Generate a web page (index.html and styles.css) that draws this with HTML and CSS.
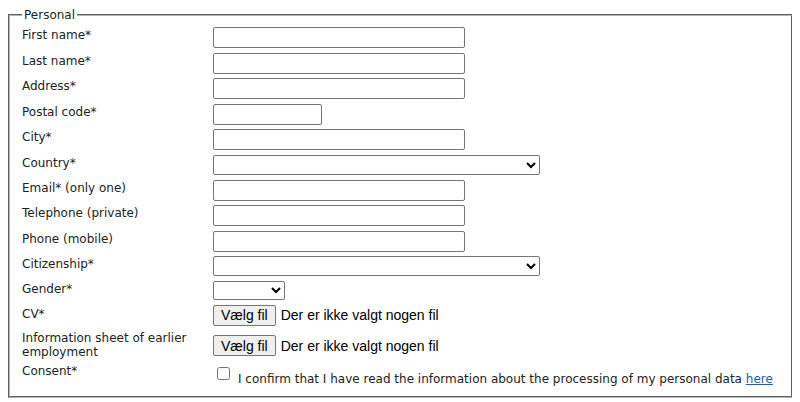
FILE: index.html
```html
<!DOCTYPE html>
<html>
<head>
<meta charset="utf-8">
<link rel="stylesheet" href="styles.css">
</head>
<body>
<fieldset class="box">
  <legend class="legend">Personal</legend>
  <div class="form">
    <label class="lbl">First name*</label>
    <div class="ctl"><input class="txt" type="text"></div>
    <label class="lbl">Last name*</label>
    <div class="ctl"><input class="txt" type="text"></div>
    <label class="lbl">Address*</label>
    <div class="ctl"><input class="txt" type="text"></div>
    <label class="lbl">Postal code*</label>
    <div class="ctl"><input class="txt short" type="text"></div>
    <label class="lbl">City*</label>
    <div class="ctl"><input class="txt" type="text"></div>
    <label class="lbl">Country*</label>
    <div class="ctl"><select class="sel wide"><option></option></select></div>
    <label class="lbl">Email* (only one)</label>
    <div class="ctl"><input class="txt" type="text"></div>
    <label class="lbl">Telephone (private)</label>
    <div class="ctl"><input class="txt" type="text"></div>
    <label class="lbl">Phone (mobile)</label>
    <div class="ctl"><input class="txt" type="text"></div>
    <label class="lbl">Citizenship*</label>
    <div class="ctl"><select class="sel wide"><option></option></select></div>
    <label class="lbl">Gender*</label>
    <div class="ctl"><select class="sel small"><option></option></select></div>
    <label class="lbl lbl-file">CV*</label>
    <div class="ctl file"><button class="btn" type="button">Vælg fil</button><span class="fname">Der er ikke valgt nogen fil</span></div>
    <label class="lbl lbl-info">Information sheet of earlier employment</label>
    <div class="ctl file file-info"><button class="btn" type="button">Vælg fil</button><span class="fname">Der er ikke valgt nogen fil</span></div>
    <label class="lbl lbl-consent">Consent*</label>
    <div class="ctl consent"><input class="chk" type="checkbox"><span class="ctext">I confirm that I have read the information about the processing of my personal data <a class="link" href="#">here</a></span></div>
  </div>
</fieldset>
</body>
</html>
```
FILE: styles.css
```css
html, body {
  background: #fff;
}
body {
  margin: 8px;
  font-family: "DejaVu Sans", Verdana, sans-serif;
  font-size: 12px;
  color: #222;
}
.box {
  margin: 0 -1px 0 0;
  padding: 5px 12px 10px 12px;
  border: 2px groove #b4b4b4;
}
.legend {
  padding: 0 2px;
  margin-left: 0;
  line-height: 14px;
}
.form {
  display: grid;
  grid-template-columns: 191px 1fr;
  row-gap: 4.6px;
  align-items: start;
}
.lbl {
  line-height: 14px;
  padding-top: 1px;
}
.ctl {
  display: flex;
  align-items: center;
}
.txt {
  box-sizing: border-box;
  width: 252px;
  height: 21px;
  margin: 0;
  padding: 1px 2px;
  border: 1px solid #767676;
  border-radius: 2px;
  font: 13px "Liberation Sans", Arial, sans-serif;
  background: #fff;
}
.txt.short {
  width: 109px;
}
.sel {
  box-sizing: border-box;
  height: 20px;
  margin: 0;
  border: 1px solid #767676;
  border-radius: 2px;
  background: #fff;
  font: 13px "Liberation Sans", Arial, sans-serif;
}
.sel.wide {
  width: 327px;
}
.sel.small {
  width: 72px;
  height: 19px;
}
.lbl-file {
  padding-top: 2px;
}
.btn {
  box-sizing: border-box;
  height: 21px;
  margin: 0;
  padding: 0 7px;
  border: 1px solid #767676;
  border-radius: 2px;
  background: #efefef;
  color: #000;
  font: 14px "Liberation Sans", Arial, sans-serif;
}
.fname {
  margin-left: 5px;
  font: 14px "Liberation Sans", Arial, sans-serif;
  color: #000;
}
.file {
  min-height: 21px;
}
.lbl-info {
  padding-top: 0;
  margin-top: 1px;
}
.file-info {
  margin-top: 5px;
}
.lbl-consent {
  margin-top: -1px;
}
.consent {
  margin-top: 0;
  align-items: flex-start;
}
.chk {
  width: 13px;
  height: 13px;
  margin: 3px 0 0 4px;
}
.ctext {
  margin-left: 8px;
  line-height: 14px;
  padding-top: 8px;
}
.link {
  color: #2a56b0;
}
```
